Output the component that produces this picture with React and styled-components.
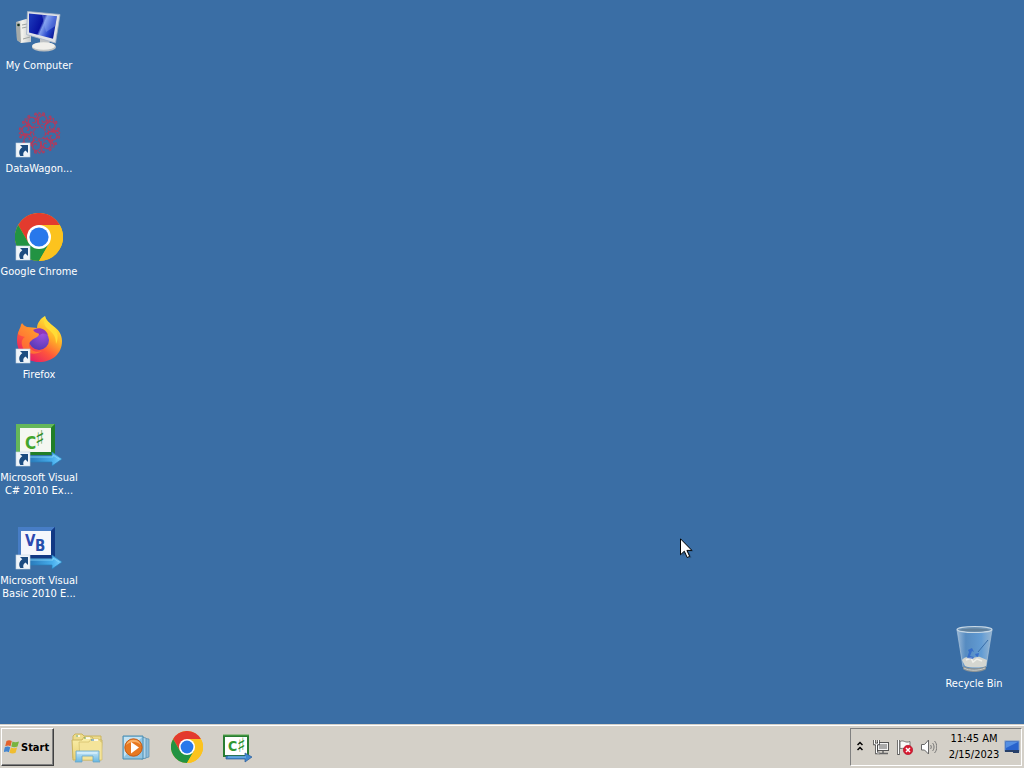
import React from "react";
import styled, { createGlobalStyle } from "styled-components";

const GlobalStyle = createGlobalStyle`
  * { box-sizing: border-box; }
  body {
    margin: 0;
    background: #3a6ea5;
    font-family: Tahoma, "DejaVu Sans Condensed", "Liberation Sans", sans-serif;
    font-size: 11px;
  }
  button { font: inherit; color: inherit; }
`;

const Screen = styled.div`
  position: relative;
  display: flex;
  flex-direction: column;
  min-height: 100vh;
  overflow: hidden;
`;

const Desktop = styled.main`
  flex: 1;
  display: flex;
  justify-content: space-between;
  padding: 0 11px 3px 0;
`;

const ShortcutColumn = styled.div`
  display: flex;
  flex-direction: column;
  align-self: ${(p) => (p.$end ? "flex-end" : "flex-start")};
`;

const Shortcut = styled.button`
  display: flex;
  flex-direction: column;
  align-items: center;
  justify-content: flex-start;
  width: 78px;
  height: 103px;
  padding: 7px 0 0;
  border: 0;
  background: transparent;
  color: #fff;
`;

const ShortcutIcon = styled.svg`
  width: 48px;
  height: 48px;
  margin-bottom: 4px;
  flex: none;
`;

const ShortcutLabel = styled.span`
  line-height: 13px;
  text-align: center;
  white-space: pre;
`;

const Taskbar = styled.footer`
  display: flex;
  align-items: stretch;
  height: 44px;
  padding: 2px 2px 2px 1px;
  background: #d4d0c8;
  border-top: 1px solid #d4d0c8;
  box-shadow: inset 0 1px 0 #fff;
`;

const StartButton = styled.button`
  display: flex;
  align-items: center;
  gap: 1px;
  width: 53px;
  padding: 0 0 0 2px;
  margin-top: 1px;
  border: 1px solid;
  border-color: #fff #404040 #404040 #fff;
  box-shadow: inset -1px -1px 0 #808080;
  background: #d4d0c8;
  color: #000;
  font-weight: bold;
`;

const StartLogo = styled.svg`
  width: 16px;
  height: 16px;
  flex: none;
`;

const QuickLaunch = styled.nav`
  flex: 1;
  display: flex;
  margin-left: 8px;
`;

const TaskButton = styled.button`
  display: flex;
  align-items: center;
  justify-content: center;
  width: 50px;
  padding: 0;
  border: 0;
  background: transparent;
`;

const TaskIcon = styled.svg`
  width: 32px;
  height: 32px;
`;

const Tray = styled.section`
  display: flex;
  align-items: center;
  gap: 8px;
  margin-top: 1px;
  padding: 0 1px 0 6px;
  border: 1px solid;
  border-color: #808080 #fff #fff #808080;
`;

const TrayButton = styled.button`
  display: flex;
  padding: 0;
  border: 0;
  background: transparent;
`;

const TrayIcon = styled.svg`
  width: ${(p) => p.$width || 16}px;
  height: 16px;
`;

const Clock = styled.time`
  width: 58px;
  line-height: 16px;
  text-align: center;
  white-space: nowrap;
  color: #000;
`;

const TrayGroup = styled.div`
  display: flex;
  align-items: center;
  gap: ${(p) => p.$gap}px;
`;

const Pointer = styled.svg`
  position: absolute;
  left: 680px;
  top: 538px;
  width: 14px;
  height: 22px;
  pointer-events: none;
`;

function ShortcutBadge() {
  return (
    <g>
      <rect x="1" y="33" width="14" height="14" fill="#f0f5fa" stroke="#c3d3e2" strokeWidth=".6" />
      <path d="M5 35h8v8l-2.500-2.500c-2.500 1.500-2.500 3.500-2 5.500H5.300c-2-3.500-1-6.500 2-8.700z" fill="#1c4c80" />
    </g>
  );
}

function ComputerArt() {
  return (
    <>
      <defs>
        <linearGradient id="screen" x1="0" y1="0.3" x2="1" y2="0.7">
          <stop offset="0" stopColor="#1a35b8" />
          <stop offset=".42" stopColor="#0712a0" />
          <stop offset=".5" stopColor="#7e9bec" />
          <stop offset=".75" stopColor="#2545cb" />
          <stop offset="1" stopColor="#07128e" />
        </linearGradient>
        <linearGradient id="case" x1="0" x2="1">
          <stop offset="0" stopColor="#b9bbb7" />
          <stop offset=".4" stopColor="#f4f3ee" />
          <stop offset="1" stopColor="#c6cacb" />
        </linearGradient>
      </defs>
      <path d="M1 15l10-3 5 1v22L6 36l-4-3z" fill="url(#case)" />
      <path d="M1 15l4 1 1 20-4-3z" fill="#a5aaa8" />
      <path d="M7 18l5-1M7 21l5-1M8 32l7-2" stroke="#a1a5a3" strokeWidth="1" />
      <circle cx="3.500" cy="18" r="1.300" fill="#173423" />
      <path d="M25 31l10 2-1 6h-9z" fill="#bfc3c6" />
      <ellipse cx="29" cy="40" rx="12" ry="4.500" fill="#bcc0c1" />
      <ellipse cx="28.500" cy="39" rx="11.500" ry="3.800" fill="#f0efeb" />
      <path d="M12.500 4.500L45 7.500 40.500 36 11.500 27.500z" fill="#dfe2e7" stroke="#a7b4c5" strokeWidth=".8" />
      <path d="M14 6.500l28 2.700-4 22.500-24-6.300z" fill="url(#screen)" />
      <path d="M27 8l15 1.400-1.700 9.500L31 25z" fill="#9bb6f5" opacity=".35" />
    </>
  );
}

function DataWagonArt() {
  const spokes = [0, 45, 90, 135, 180, 225, 270, 315];
  return (
    <>
      <g fill="none" stroke="#c83250" strokeWidth="1.100" opacity=".85" transform="translate(24.500 23)">
        <circle r="6" strokeDasharray="3 1" />
        <circle r="9" strokeWidth="1" strokeDasharray="2 2" />
        {spokes.map((a) => (
          <g key={a} transform={`rotate(${a + 12})`}>
            <path d="M0-7c-5-2-6-7-2-10 3-2 6 0 6 3s-4 4-4 1" />
            <path d="M3-8l4-4 1-5M-3-9l-3-5 1-5" strokeWidth="1" />
            <circle cx="0" cy="-19.500" r="1" />
            <circle cx="7" cy="-18" r=".9" />
            <path d="M-2-18l-3-2M4-15l2 3" />
          </g>
        ))}
      </g>
      <ShortcutBadge />
    </>
  );
}

function ChromeArt() {
  return (
    <>
      <circle cx="24" cy="24" r="24" fill="#fbc116" />
      <path d="M3.200 12A24 24 0 0 1 44.800 12H24L13.600 30z" fill="#e33b2e" />
      <path d="M3.200 12A24 24 0 0 0 24 48L34.400 30 24 24 13.600 30z" fill="#229342" />
      <path d="M24 12h20.800A24 24 0 0 1 24 48L34.400 30z" fill="#fcc31e" />
      <circle cx="24" cy="24" r="12" fill="#fff" />
      <circle cx="24" cy="24" r="9.600" fill="#2878eb" />
    </>
  );
}

function FirefoxArt() {
  return (
    <>
      <defs>
        <linearGradient id="fox" x1=".85" y1=".1" x2=".25" y2=".95">
          <stop offset="0" stopColor="#fff13d" />
          <stop offset=".35" stopColor="#ffac28" />
          <stop offset=".65" stopColor="#ff573b" />
          <stop offset="1" stopColor="#e51d68" />
        </linearGradient>
        <linearGradient id="foxHead" x1="0" y1="1" x2=".7" y2="0">
          <stop offset="0" stopColor="#ff5739" />
          <stop offset="1" stopColor="#ffa22c" />
        </linearGradient>
        <radialGradient id="globe" cx=".65" cy=".2" r=".8">
          <stop offset="0" stopColor="#a04fdf" />
          <stop offset="1" stopColor="#593bb7" />
        </radialGradient>
      </defs>
      <path d="M30 0c1 5 5 7 8 10 5 3 9 8 9 15 0 13-10 21-23 21S2 37 2 24c0-5 1-9 4-12 0-2 0-3 1-5 1 2 3 3 5 4 4 0 7 1 10 1 0-5 4-10 8-12z" fill="url(#fox)" />
      <circle cx="24" cy="24" r="10" fill="url(#globe)" />
      <path d="M17 15c5-5 14-3 16 4-3-2-6-2-8 0l-5 1z" fill="#8e36bb" />
      <path d="M3 18c1-5 3-7 3-10l5 4c4-1 6 0 8 3 1 2 5 2 5 3 0 3-5 4-7 6s-3 2-3 5c1 6 7 8 13 6-9 6-19 1-20-6-1-4 1-7 3-8-2-1-5-1-7-3z" fill="url(#foxHead)" />
      <path d="M30 0c1 5 5 7 8 10 5 5 6 11 3 18 0-8-3-11-8-15-4-3-5-8-3-13z" fill="#ffdc36" />
      <ShortcutBadge />
    </>
  );
}

function BlueArrow({ id }) {
  return (
    <>
      <defs>
        <linearGradient id={id} x1="0" y1="0" x2="1" y2="0">
          <stop offset="0" stopColor="#2878b9" />
          <stop offset=".7" stopColor="#46adeb" />
          <stop offset="1" stopColor="#79d0ff" />
        </linearGradient>
      </defs>
      <path d="M14 37h23v-4l10 7-10 7v-4H14z" fill={`url(#${id})`} stroke="#287eb9" strokeWidth=".7" />
      <path d="M15 38h23v-2l6 4" fill="none" stroke="#8ad7fa" strokeWidth=".8" />
    </>
  );
}

const IconLetter = styled.text`
  font-family: "DejaVu Sans Condensed", "DejaVu Sans", sans-serif;
  font-weight: bold;
`;

function CSharpArt() {
  return (
    <>
      <path d="M1 5h39v31H1z" fill="#329334" />
      <path d="M1 5h39l-4 4H5v24l-4 3z" fill="#65b75a" />
      <path d="M36 9l4-4v31H1l4-3h31z" fill="#217e28" />
      <path d="M5 9h31v24H5z" fill="#f5f7f1" />
      <IconLetter x="10" y="30" fontSize="17" fill="#43a62c">C</IconLetter>
      <IconLetter x="20" y="27" fontSize="22" fill="#338d27">♯</IconLetter>
      <BlueArrow id="sharpArrow" />
      <ShortcutBadge />
    </>
  );
}

function VisualBasicArt() {
  return (
    <>
      <path d="M3 5h37v31H3z" fill="#174fa9" />
      <path d="M3 5h37l-4 4H6v24l-3 3z" fill="#477dc6" />
      <path d="M36 9l4-4v31H3l3-3h30z" fill="#123984" />
      <path d="M6 9h30v24H6z" fill="#f5f7fc" />
      <IconLetter x="10" y="24" fontSize="15" fill="#2e49b0">V</IconLetter>
      <IconLetter x="20" y="29" fontSize="15" fill="#254fab">B</IconLetter>
      <BlueArrow id="basicArrow" />
      <ShortcutBadge />
    </>
  );
}

function RecycleArt() {
  return (
    <>
      <defs>
        <linearGradient id="bin" x1="0" x2="1">
          <stop offset="0" stopColor="#bfd5ea" stopOpacity=".75" />
          <stop offset=".25" stopColor="#659bd0" stopOpacity=".65" />
          <stop offset=".7" stopColor="#6ca7df" stopOpacity=".8" />
          <stop offset="1" stopColor="#c3d9e9" stopOpacity=".65" />
        </linearGradient>
      </defs>
      <path d="M7 5l6 37c3 4 20 4 23 0l6-37z" fill="url(#bin)" stroke="#a7c1d9" strokeWidth=".7" />
      <path d="M12 35c3-4 6-2 9-3 3 2 6-1 9 0l7 3-1 6c-4 2-17 2-21 0z" fill="#d5d6d0" />
      <path d="M16 35l5-2 2 4 4-3 5 2" fill="none" stroke="#f1f0ea" strokeWidth="1.500" />
      <path d="M13 41c4 3 19 3 23 0v3c-4 4-19 4-23 0z" fill="#8d9496" />
      <path d="M14 43c5 3 15 3 21 0" fill="none" stroke="#cacdca" />
      <ellipse cx="24.500" cy="4.500" rx="17.500" ry="3" fill="#6d93b5" stroke="#c8d8e5" strokeWidth="1.200" />
      <path d="M9 5c8-2 22-2 31 0-8 2-23 2-31 0z" fill="#607f99" />
      <path d="M18 25l4-2 2 4-2-1-2 5 4 1-1 2-6-1 2-6zM25 29l4-1-1 4-2-1z" fill="#265ec9" opacity=".7" />
      <path d="M28 27l10-12" stroke="#386da9" strokeWidth="1" />
    </>
  );
}

function ExplorerArt() {
  return (
    <>
      <defs>
        <linearGradient id="folder" x1="0" y1="0" x2="0" y2="1">
          <stop offset="0" stopColor="#faf0ac" />
          <stop offset="1" stopColor="#e9cf70" />
        </linearGradient>
        <linearGradient id="stand" x1="0" y1="0" x2="0" y2="1">
          <stop offset="0" stopColor="#cceafa" />
          <stop offset="1" stopColor="#65b6e1" />
        </linearGradient>
      </defs>
      <path d="M2 5l2-2h7l2 2h17v22H2z" fill="#eedc8c" stroke="#cbb55e" />
      <path d="M1 9h10l2-3h8l2 3h8l-1 20H2z" fill="url(#folder)" stroke="#c9b460" />
      <path d="M8 11h10l2-3h8l2 3h1v18H9z" fill="#f4e49a" stroke="#d1bd69" strokeWidth=".7" />
      <path d="M5 5h4M14 7h5M21 9h6" stroke="#fff" strokeWidth="1.500" />
      <path d="M6 4v2M14 6v2" stroke="#639d4a" strokeWidth="1" />
      <path d="M20 9h3" stroke="#327faa" />
      <path d="M5 20h23v9l1 2h-7v-6H11v6H4l1-2z" fill="url(#stand)" stroke="#67a5c6" strokeWidth=".8" />
      <path d="M6 22h20" stroke="#e5f6ff" />
    </>
  );
}

function MediaArt() {
  return (
    <>
      <path d="M21 7l7 1v18l-7 2z" fill="#8cbcda" stroke="#568daf" strokeWidth=".7" />
      <path d="M20 6l5 1v20l-5 1z" fill="#b2d5ea" stroke="#568daf" strokeWidth=".7" />
      <path d="M2 5h20v23H2z" fill="#91c5e2" stroke="#498db2" />
      <path d="M3 6h18L3 26z" fill="#c5e3f2" />
      <circle cx="12.500" cy="16.500" r="8.700" fill="#e77820" stroke="#c35a16" />
      <path d="M5 14a8 8 0 0 1 15 0c-4-4-10-4-15 0z" fill="#f8ae64" />
      <path d="M10 11l8 5.500-8 6z" fill="#fff" />
    </>
  );
}

function CSharpTaskArt() {
  return (
    <>
      <path d="M3 5h24v20H3z" fill="#fff" stroke="#287d32" strokeWidth="2" />
      <path d="M2 4h26" stroke="#5aaa51" />
      <IconLetter x="7" y="20" fontSize="14" fill="#319732">C</IconLetter>
      <IconLetter x="16" y="21" fontSize="20" fill="#238d2a">♯</IconLetter>
      <path d="M5 25h19v-3l7 4-7 5v-3H5z" fill="#4188cf" stroke="#2c5b9a" strokeWidth=".7" />
      <path d="M7 26h18" stroke="#7ec4ef" />
    </>
  );
}

const shortcuts = [
  { label: "My Computer", Art: ComputerArt },
  { label: "DataWagon...", Art: DataWagonArt },
  { label: "Google Chrome", Art: () => <><ChromeArt /><ShortcutBadge /></> },
  { label: "Firefox", Art: FirefoxArt },
  { label: "Microsoft Visual\nC# 2010 Ex...", Art: CSharpArt },
  { label: "Microsoft Visual\nBasic 2010 E...", Art: VisualBasicArt },
];

const pinned = [
  { name: "Windows Explorer", Art: ExplorerArt, box: 32 },
  { name: "Media Player", Art: MediaArt, box: 32 },
  { name: "Google Chrome", Art: ChromeArt, box: 48 },
  { name: "Visual C# 2010", Art: CSharpTaskArt, box: 32 },
];

function DesktopShortcut({ label, Art }) {
  return (
    <Shortcut type="button">
      <ShortcutIcon viewBox="0 0 48 48" aria-hidden="true"><Art /></ShortcutIcon>
      <ShortcutLabel>{label}</ShortcutLabel>
    </Shortcut>
  );
}

export default function App() {
  return (
    <Screen>
      <GlobalStyle />
      <Desktop>
        <ShortcutColumn>
          {shortcuts.map((s) => <DesktopShortcut key={s.label} {...s} />)}
        </ShortcutColumn>
        <ShortcutColumn $end>
          <DesktopShortcut label="Recycle Bin" Art={RecycleArt} />
        </ShortcutColumn>
      </Desktop>
      <Taskbar>
        <StartButton type="button">
          <StartLogo viewBox="0 0 16 16" aria-hidden="true">
            <path d="M2.500 2c2-1.300 3.500-1 5.300 0L6.500 7.200c-1.500-1-3-1-5.300 0z" fill="#e3622c" />
            <path d="M8.500 2.500c1.700 1 3.800 1 6.500 0l-1.500 5c-2 1-4.300 1-6.200 0z" fill="#78b440" />
            <path d="M.8 8.200c2-1 3.600-1 5.400 0l-1.300 5c-1.500-1-3.400-1-5.200 0z" fill="#4386cf" />
            <path d="M6.900 8.500c1.900 1 4.100 1 6.200 0l-1.500 5.200c-1.900 1.100-4.300 1-6.200 0z" fill="#f0bd2f" />
          </StartLogo>
          Start
        </StartButton>
        <QuickLaunch aria-label="Pinned programs">
          {pinned.map(({ name, Art, box }) => (
            <TaskButton key={name} type="button" aria-label={name}>
              <TaskIcon viewBox={`0 0 ${box} ${box}`} aria-hidden="true"><Art /></TaskIcon>
            </TaskButton>
          ))}
        </QuickLaunch>
        <Tray aria-label="Notification area">
          <TrayGroup $gap={10}>
            <TrayButton type="button" aria-label="Show hidden icons">
              <TrayIcon $width={6} viewBox="0 0 6 16">
                <path d="M.5 6L3 3.500 5.500 6M.5 11L3 8.500 5.500 11" fill="none" stroke="#000" strokeWidth="1.500" />
              </TrayIcon>
            </TrayButton>
            <TrayGroup $gap={8}>
              <TrayButton type="button" aria-label="Network">
                <TrayIcon viewBox="0 0 16 16">
                  <rect x="4.500" y="3.500" width="11" height="8" fill="#aaa" stroke="#555" />
                  <rect x="5.500" y="4.500" width="9" height="6" fill="#aaa" stroke="#f4f4f4" />
                  <path d="M6 14.500h9M10 12v2" stroke="#666" strokeWidth="1.500" />
                  <path d="M1.500 1v4h4V1M3.500 5v9h3" fill="none" stroke="#444" strokeWidth="2.500" />
                  <path d="M1.500 1v4h4V1M3.500 5v9h3" fill="none" stroke="#fff" strokeWidth="1" />
                </TrayIcon>
              </TrayButton>
              <TrayButton type="button" aria-label="Action center">
                <TrayIcon viewBox="0 0 16 16">
                  <path d="M1.500 1v15" stroke="#555" strokeWidth="2.500" />
                  <path d="M1.500 1v14" stroke="#fff" />
                  <path d="M3 2.500c4-2 5 2 10 0v7c-4 2-6-1-10 0z" fill="#f9f9f9" stroke="#777" />
                  <circle cx="11" cy="11" r="4.700" fill="#d81b31" stroke="#a80d25" strokeWidth=".6" />
                  <path d="M9 9l4 4m0-4l-4 4" stroke="#fff" strokeWidth="1.500" />
                </TrayIcon>
              </TrayButton>
              <TrayButton type="button" aria-label="Volume">
                <TrayIcon viewBox="0 0 16 16">
                  <path d="M.5 5.500h3L7.500 1v14l-4-4h-3z" fill="#fff" stroke="#666" />
                  <path d="M9.500 6c1 1 1 3 0 4M11.500 4c2 2 2 6 0 8M13.500 2c3 3 3 9 0 12" fill="none" stroke="#777" />
                </TrayIcon>
              </TrayButton>
            </TrayGroup>
          </TrayGroup>
          <TrayGroup $gap={1}>
            <Clock dateTime="2023-02-15T11:45">11:45 AM<br />2/15/2023</Clock>
            <TrayButton type="button" aria-label="Show desktop">
              <TrayIcon viewBox="0 0 16 16">
                <rect x="1" y="2" width="14" height="10" fill="#2863cd" stroke="#7094c4" />
                <path d="M2 3h12L2 9z" fill="#548fe3" />
                <path d="M1 11h14v3H9v-1H1z" fill="#263f69" />
              </TrayIcon>
            </TrayButton>
          </TrayGroup>
        </Tray>
      </Taskbar>
      <Pointer viewBox="0 0 14 22" aria-hidden="true">
        <path d="M2.500 2.500v16l4-4 3 6 2-1-3-6h5z" fill="#173653" opacity=".35" />
        <path d="M.5.8v16l3.800-3.600 2.900 6.300 2.500-1.100-2.800-6h5z" fill="#fff" stroke="#000" strokeWidth="1" />
      </Pointer>
    </Screen>
  );
}
